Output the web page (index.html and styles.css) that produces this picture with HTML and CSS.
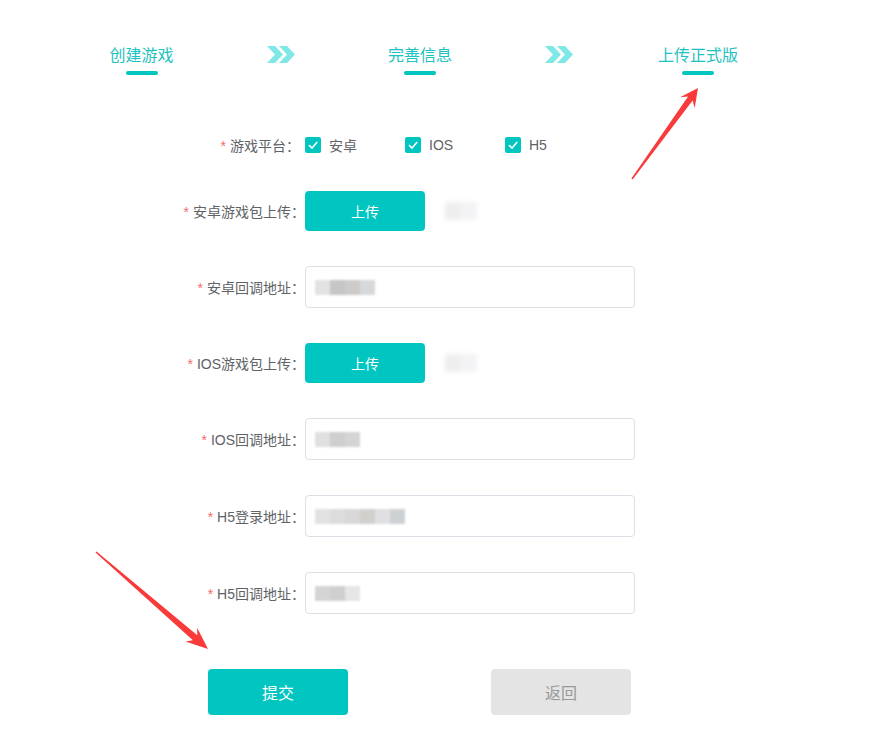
FILE: index.html
```html
<!DOCTYPE html>
<html lang="zh-CN">
<head>
<meta charset="utf-8">
<title>上传正式版</title>
<link rel="stylesheet" href="styles.css">
</head>
<body>
<div class="page">
  <div class="steps">
    <div class="step"><span class="step-text">创建游戏</span><span class="step-bar"></span></div>
    <div class="chev"><svg width="28" height="17" viewBox="0 0 28 17"><polygon points="0,0 8,0 16,8.5 8,17 0,17 8,8.5"/><polygon points="12,0 20,0 28,8.5 20,17 12,17 20,8.5"/></svg></div>
    <div class="step"><span class="step-text">完善信息</span><span class="step-bar"></span></div>
    <div class="chev"><svg width="28" height="17" viewBox="0 0 28 17"><polygon points="0,0 8,0 16,8.5 8,17 0,17 8,8.5"/><polygon points="12,0 20,0 28,8.5 20,17 12,17 20,8.5"/></svg></div>
    <div class="step"><span class="step-text">上传正式版</span><span class="step-bar"></span></div>
  </div>

  <form class="form">
    <div class="row row-platform">
      <label class="label label-wide"><span class="req">*</span>游戏平台：</label>
      <div class="checks">
        <span class="check"><span class="box"><svg width="16" height="16" viewBox="0 0 16 16"><path d="M4 8.2 L7 11 L12.2 5" /></svg></span>安卓</span>
        <span class="check"><span class="box"><svg width="16" height="16" viewBox="0 0 16 16"><path d="M4 8.2 L7 11 L12.2 5" /></svg></span>IOS</span>
        <span class="check"><span class="box"><svg width="16" height="16" viewBox="0 0 16 16"><path d="M4 8.2 L7 11 L12.2 5" /></svg></span>H5</span>
      </div>
    </div>

    <div class="row">
      <label class="label"><span class="req">*</span>安卓游戏包上传：</label>
      <button type="button" class="upload">上传</button>
      <span class="blur-file"><i class="b1"></i><i class="b2"></i></span>
    </div>

    <div class="row">
      <label class="label"><span class="req">*</span>安卓回调地址：</label>
      <div class="input"><span class="blur"><i style="background:#e2e2e2"></i><i style="background:#c6c6c6"></i><i style="background:#cccbc9"></i><i style="background:#d6d8da"></i></span></div>
    </div>

    <div class="row">
      <label class="label"><span class="req">*</span>IOS游戏包上传：</label>
      <button type="button" class="upload">上传</button>
      <span class="blur-file"><i class="b1"></i><i class="b2"></i></span>
    </div>

    <div class="row row-loose">
      <label class="label"><span class="req">*</span>IOS回调地址：</label>
      <div class="input"><span class="blur"><i style="background:#e0e0e0"></i><i style="background:#cfcfcf"></i><i style="background:#d4d4d4"></i></span></div>
    </div>

    <div class="row row-loose">
      <label class="label"><span class="req">*</span>H5登录地址：</label>
      <div class="input"><span class="blur"><i style="background:#e2e2e2"></i><i style="background:#dcdcdc"></i><i style="background:#d8d8d8"></i><i style="background:#d2d0cc"></i><i style="background:#e0e0e2"></i><i style="background:#ced1d4"></i></span></div>
    </div>

    <div class="row row-last">
      <label class="label"><span class="req">*</span>H5回调地址：</label>
      <div class="input"><span class="blur"><i style="background:#d4d4d4"></i><i style="background:#cfcfcf"></i><i style="background:#e6e6e6"></i></span></div>
    </div>

    <div class="actions">
      <button type="button" class="btn btn-primary">提交</button>
      <button type="button" class="btn btn-back">返回</button>
    </div>
  </form>

  <svg class="arrows" width="890" height="754" viewBox="0 0 890 754">
    <polygon points="698,88 694.7,107.9 692.6,100.4 632.6,179.4 631.4,178.6 688.1,96.6 680.1,97.3"/>
    <polygon points="208,649 185.5,641.4 192.9,640.3 95.5,552.6 96.5,551.4 197.3,635.3 197.2,627.8"/>
  </svg>
</div>
</body>
</html>
```

FILE: styles.css
```css
* { box-sizing: border-box; }

html, body {
  margin: 0;
  padding: 0;
  background: #fff;
}

body {
  font-family: "Liberation Sans", "Noto Sans CJK SC", sans-serif;
  color: #606266;
}

.page {
  position: relative;
  width: 890px;
  height: 754px;
  overflow: hidden;
}

/* steps */
.steps {
  display: grid;
  grid-template-columns: 251px 28px 250px 28px 250px;
  padding-left: 16px;
  padding-top: 45px;
}

.step {
  display: flex;
  flex-direction: column;
  align-items: center;
}

.step-text {
  font-size: 16px;
  line-height: 22px;
  color: #1ec2c0;
}

.step-bar {
  margin-top: 4px;
  width: 32px;
  height: 4px;
  border-radius: 2px;
  background: #00c5c1;
}

.chev {
  padding-top: 1px;
}

.chev svg {
  display: block;
  fill: #7fe8e6;
}

/* form */
.form {
  margin-top: 49px;
  display: flex;
  flex-direction: column;
}

.row {
  display: flex;
  align-items: center;
  height: 42px;
  margin-bottom: 34px;
}

.row-platform {
  margin-bottom: 24px;
}

.row-loose {
  margin-bottom: 35px;
}

.row-last {
  margin-bottom: 0;
}

.label {
  width: 305px;
  text-align: right;
  font-size: 14px;
  color: #606266;
  flex: none;
}

.label-wide {
  padding-right: 5px;
}

.req {
  color: #f56c6c;
  margin-right: 4px;
}

.checks {
  display: flex;
}

.check {
  width: 100px;
  display: flex;
  align-items: center;
  font-size: 14px;
  color: #606266;
}

.box {
  width: 16px;
  height: 16px;
  border-radius: 2px;
  background: #00c5c1;
  margin-right: 8px;
  flex: none;
}

.box svg {
  display: block;
  fill: none;
  stroke: #fff;
  stroke-width: 1.6;
}

.upload {
  width: 120px;
  height: 40px;
  border: 0;
  border-radius: 4px;
  background: #00c5c1;
  color: #fff;
  font-family: inherit;
  font-size: 14px;
  padding: 0;
}

.blur-file {
  display: flex;
  margin-left: 20px;
  filter: blur(2px);
}

.blur-file i {
  display: block;
  width: 16px;
  height: 18px;
}

.blur-file .b1 { background: #eeeeee; }
.blur-file .b2 { background: #f3f3f5; }

.input {
  width: 330px;
  height: 42px;
  border: 1px solid #dcdfe6;
  border-radius: 4px;
  display: flex;
  align-items: center;
  padding-left: 9px;
}

.blur {
  display: flex;
  filter: blur(0.8px);
}

.blur i {
  display: block;
  width: 15px;
  height: 15px;
}

/* actions */
.actions {
  display: flex;
  gap: 143px;
  padding-left: 208px;
  margin-top: 55px;
}

.btn {
  width: 140px;
  height: 46px;
  border: 0;
  border-radius: 4px;
  font-family: inherit;
  font-size: 16px;
  padding: 0;
}

.btn-primary {
  background: #00c5c1;
  color: #fff;
}

.btn-back {
  background: #e4e4e4;
  color: #999;
}

/* annotation arrows */
.arrows {
  position: absolute;
  left: 0;
  top: 0;
  pointer-events: none;
}

.arrows polygon {
  fill: #f83a3a;
}
```
